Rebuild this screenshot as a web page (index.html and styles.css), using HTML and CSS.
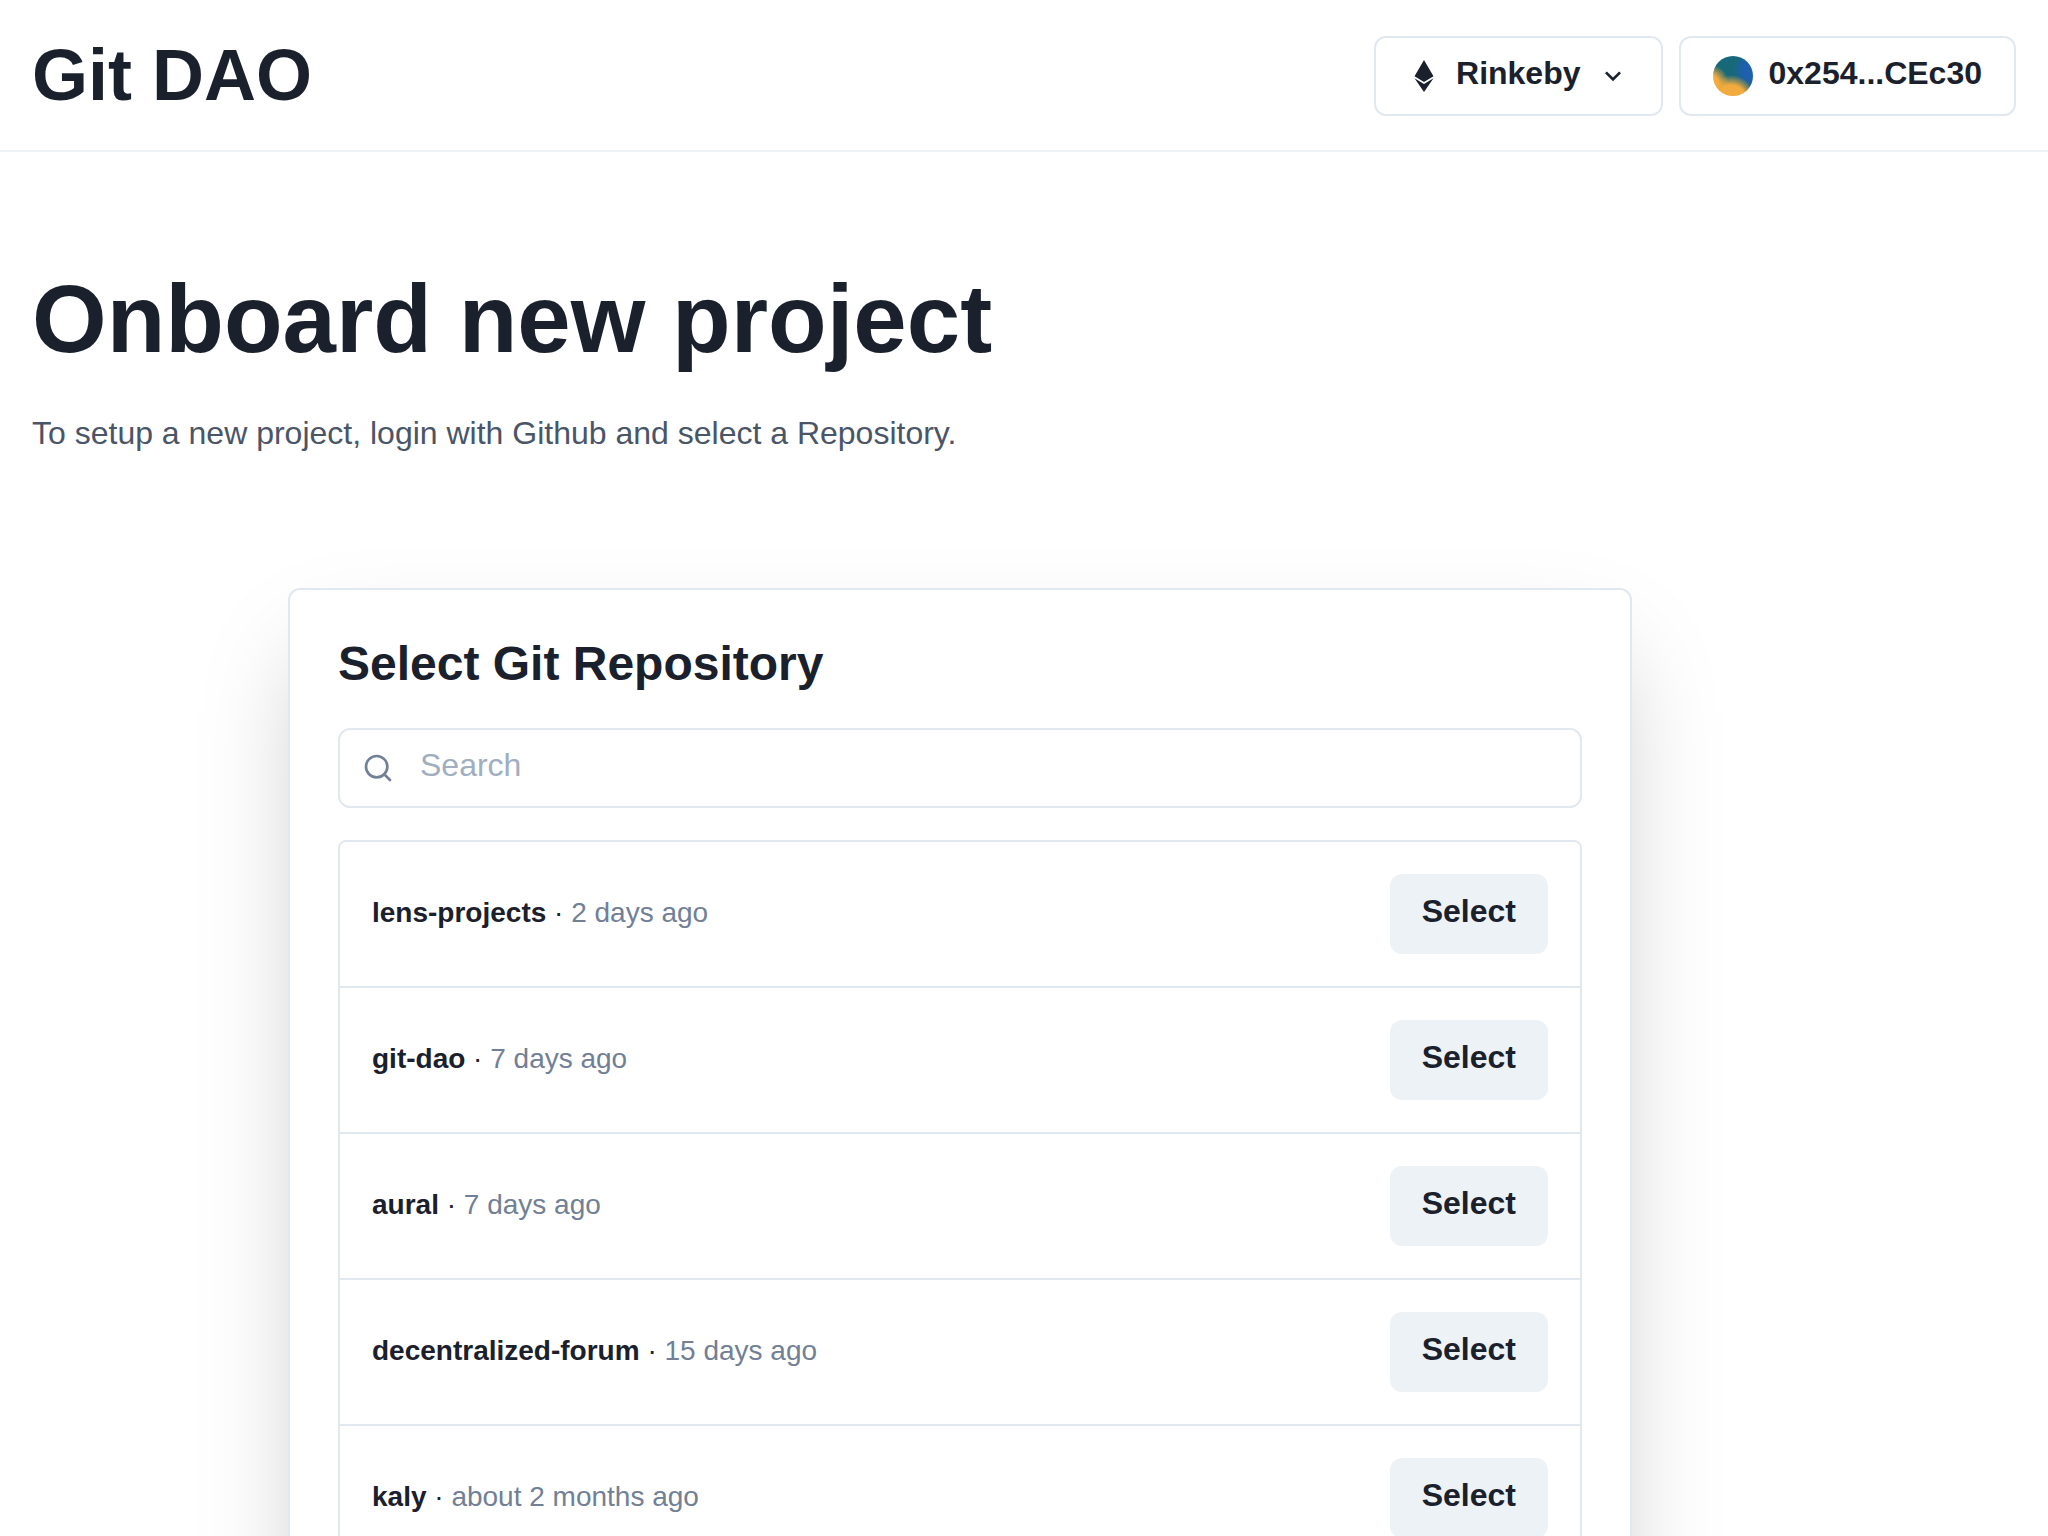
FILE: index.html
```html
<!DOCTYPE html>
<html lang="en">
<head>
  <meta charset="utf-8">
  <meta name="viewport" content="width=device-width, initial-scale=1">
  <title>Git DAO</title>
  <link rel="stylesheet" href="styles.css">
</head>
<body>
  <header class="header">
    <div class="brand">Git DAO</div>
    <div class="header-actions">
      <button class="button button-outline" type="button">
        <svg class="icon" viewBox="0 0 320 512" fill="currentColor" aria-hidden="true"><path d="M311.9 260.8L160 353.6 8 260.8 160 0l151.9 260.8zM160 383.4L8 290.6 160 512l152-221.4-152 92.8z"/></svg>
        <span class="button-label">Rinkeby</span>
        <svg class="icon" viewBox="0 0 24 24" fill="currentColor" aria-hidden="true"><path d="M16.59 8.59L12 13.17 7.41 8.59 6 10l6 6 6-6z"/></svg>
      </button>
      <button class="button button-outline" type="button">
        <span class="avatar"></span>
        <span class="button-label">0x254...CEc30</span>
      </button>
    </div>
  </header>

  <main class="main">
    <h1 class="page-title">Onboard new project</h1>
    <p class="lead">To setup a new project, login with Github and select a Repository.</p>

    <section class="card">
      <h2 class="card-title">Select Git Repository</h2>
      <label class="search">
        <span class="search-icon">
          <svg class="icon" viewBox="0 0 24 24" fill="none" stroke="currentColor" stroke-width="2" stroke-linecap="round" stroke-linejoin="round" aria-hidden="true"><circle cx="11" cy="11" r="8"/><path d="M21 21l-4.35-4.35"/></svg>
        </span>
        <input class="search-input" type="search" placeholder="Search" aria-label="Search">
      </label>
      <ul class="repo-list">
        <li class="repo">
          <p class="repo-info"><strong>lens-projects</strong> · <span class="repo-age">2 days ago</span></p>
          <button class="button button-solid" type="button"><span class="button-label">Select</span></button>
        </li>
        <li class="repo">
          <p class="repo-info"><strong>git-dao</strong> · <span class="repo-age">7 days ago</span></p>
          <button class="button button-solid" type="button"><span class="button-label">Select</span></button>
        </li>
        <li class="repo">
          <p class="repo-info"><strong>aural</strong> · <span class="repo-age">7 days ago</span></p>
          <button class="button button-solid" type="button"><span class="button-label">Select</span></button>
        </li>
        <li class="repo">
          <p class="repo-info"><strong>decentralized-forum</strong> · <span class="repo-age">15 days ago</span></p>
          <button class="button button-solid" type="button"><span class="button-label">Select</span></button>
        </li>
        <li class="repo">
          <p class="repo-info"><strong>kaly</strong> · <span class="repo-age">about 2 months ago</span></p>
          <button class="button button-solid" type="button"><span class="button-label">Select</span></button>
        </li>
      </ul>
    </section>
  </main>
</body>
</html>
```

FILE: styles.css
```css
* {
  box-sizing: border-box;
  margin: 0;
  padding: 0;
}

body {
  background: #fff;
  color: #1a202c;
  font-family: "Liberation Sans", Arial, sans-serif;
  font-size: 32px;
  line-height: 48px;
}

.header {
  display: flex;
  align-items: center;
  justify-content: space-between;
  padding: 32px 32px 30px;
  border-bottom: 2px solid #edf2f7;
}

.brand {
  padding-bottom: 2px;
  font-size: 72px;
  font-weight: 700;
  line-height: 86px;
}

.header-actions {
  display: flex;
  gap: 16px;
}

.button {
  display: inline-flex;
  align-items: center;
  justify-content: center;
  gap: 16px;
  height: 80px;
  padding: 0 32px;
  border: 0;
  border-radius: 12px;
  color: inherit;
  font: inherit;
  font-weight: 700;
  cursor: pointer;
}

.button-outline {
  border: 2px solid #e2e8f0;
  background: #fff;
}

.button-solid {
  background: #edf2f7;
}

.button-label {
  padding-bottom: 6px;
}

.icon {
  display: block;
  width: 32px;
  height: 32px;
}

.avatar {
  width: 40px;
  height: 40px;
  border-radius: 50%;
  background:
    radial-gradient(circle at 18px 44px, #f2ab3c 15px, rgba(242, 171, 60, 0) 25px),
    radial-gradient(circle at -4px 28px, #f2ab3c 10px, rgba(242, 171, 60, 0) 20px),
    radial-gradient(circle at 40px 14px, #1f5fb0 10px, rgba(31, 95, 176, 0) 20px),
    #17697a;
}

.main {
  max-width: 1920px;
  padding: 112px 32px 128px;
}

.page-title {
  font-size: 96px;
  line-height: 110px;
}

.lead {
  margin-top: 34px;
  color: #4a5568;
  line-height: 50px;
}

.card {
  max-width: 1344px;
  margin: 130px auto 0;
  padding: 48px;
  border: 2px solid #e2e8f0;
  border-radius: 12px;
  background: #fff;
  box-shadow: 0 50px 100px -24px rgba(0, 0, 0, 0.25);
}

.card-title {
  font-size: 48px;
  line-height: 52px;
}

.search {
  display: flex;
  height: 80px;
  margin-top: 38px;
  border: 2px solid #e2e8f0;
  border-radius: 12px;
}

.search-icon {
  display: flex;
  flex: none;
  align-items: center;
  justify-content: center;
  width: 76px;
  color: #718096;
}

.search-input {
  flex: 1;
  min-width: 0;
  padding: 0 32px 6px 4px;
  border: 0;
  outline: 0;
  background: none;
  color: inherit;
  font: inherit;
  appearance: none;
}

.search-input::placeholder {
  color: #a0aec0;
  opacity: 1;
}

.repo-list {
  margin-top: 32px;
  border: 2px solid #e2e8f0;
  border-radius: 8px;
  list-style: none;
}

.repo {
  display: flex;
  align-items: center;
  justify-content: space-between;
  gap: 32px;
  padding: 32px;
}

.repo + .repo {
  border-top: 2px solid #e2e8f0;
}

.repo-info {
  padding-bottom: 2px;
  font-size: 28px;
  line-height: 42px;
}

.repo-age {
  color: #718096;
}
```
